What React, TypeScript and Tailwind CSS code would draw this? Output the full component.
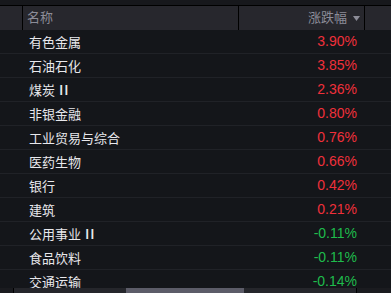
import React from "react";

const rows: [string, string, boolean][] = [
  ["有色金属", "3.90%", true],
  ["石油石化", "3.85%", true],
  ["煤炭Ⅱ", "2.36%", true],
  ["非银金融", "0.80%", true],
  ["工业贸易与综合", "0.76%", true],
  ["医药生物", "0.66%", true],
  ["银行", "0.42%", true],
  ["建筑", "0.21%", true],
  ["公用事业Ⅱ", "-0.11%", false],
  ["食品饮料", "-0.11%", false],
  ["交通运输", "-0.14%", false],
];

function Name({ text }: { text: string }) {
  if (!text.endsWith("Ⅱ")) return <>{text}</>;
  return (
    <>
      {text.slice(0, -1)}
      <span className="inline-block scale-x-[1.35] origin-left">Ⅱ</span>
    </>
  );
}

export default function App() {
  return (
    <div
      className="w-[391px] h-[293px] overflow-hidden bg-[#14161a] flex flex-col"
      style={{ fontFamily: '"Liberation Sans", "Noto Sans CJK SC", sans-serif' }}
    >
      <div className="h-[5px] bg-[#17181c] shrink-0" />
      <div className="h-[1px] bg-black shrink-0" />
      <div className="h-[24px] bg-[#27272d] flex shrink-0 text-[13px] text-[#8c8c98]">
        <div className="w-[22px]" />
        <div className="w-[1px] bg-black" />
        <div className="w-[215px] flex items-center pl-[4px]">名称</div>
        <div className="w-[1px] bg-black" />
        <div className="w-[125px] flex items-center justify-end pr-[4px] gap-[6px]">
          <span>涨跌幅</span>
          <svg width="7" height="5" viewBox="0 0 7 5">
            <path d="M0 0 H7 L3.5 5 Z" fill="#8c8c98" />
          </svg>
        </div>
        <div className="w-[1px] bg-black" />
        <div className="flex-1" />
      </div>
      <div className="flex-1 overflow-hidden">
        {rows.map(([name, val, up], i) => (
          <div
            key={i}
            className="h-[24px] flex items-center border-t border-[#202227] first:border-t-0 first:h-[23px]"
          >
            <div className="pl-[29px] text-[13px] text-[#e8e8ec] flex-1 [font-family:'Noto_Sans_CJK_SC',sans-serif]">
              <Name text={name} />
            </div>
            <div
              className={
                "w-[100px] text-right pr-[34px] text-[14px] " +
                (up ? "text-[#f0303a]" : "text-[#1fbb4c]")
              }
            >
              {val}
            </div>
          </div>
        ))}
      </div>
      <div className="h-[5px] flex shrink-0">
        <div className="w-[13px] bg-[#1a1b1f]" />
        <div className="w-[1px] bg-black" />
        <div className="w-[112px] bg-[#25262b]" />
        <div className="w-[118px] bg-[#5c5c68]" />
        <div className="w-[112px] bg-[#25262b]" />
        <div className="w-[1px] bg-black" />
        <div className="flex-1 bg-[#1a1b1f]" />
      </div>
    </div>
  );
}
